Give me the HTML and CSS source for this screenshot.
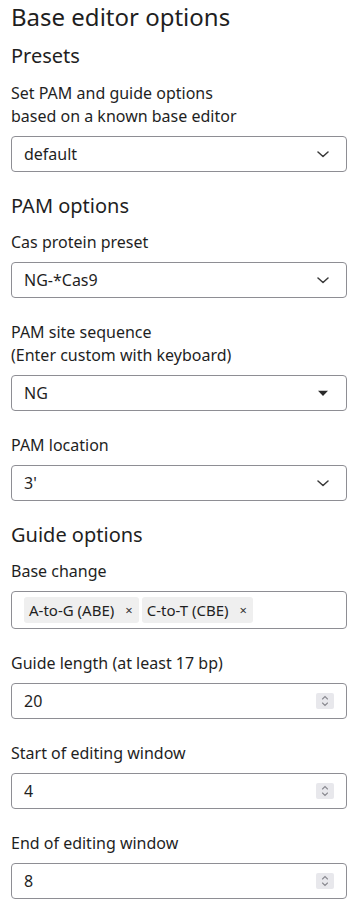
FILE: index.html
```html
<!DOCTYPE html>
<html>
<head>
<meta charset="utf-8">
<link rel="stylesheet" href="styles.css">
</head>
<body>
<div class="panel">
  <h1 class="title">Base editor options</h1>

  <h2 class="section section-first">Presets</h2>
  <div class="field">
    <div class="label">Set PAM and guide options<br>based on a known base editor</div>
    <div class="control select"><span class="value">default</span>
      <svg class="chev" width="12" height="7" viewBox="0 0 12 7"><path d="M1 1 L6 5.5 L11 1" fill="none" stroke="#3a3a3a" stroke-width="1.5" stroke-linecap="round" stroke-linejoin="round"/></svg>
    </div>
  </div>

  <h2 class="section">PAM options</h2>
  <div class="field">
    <div class="label">Cas protein preset</div>
    <div class="control select"><span class="value">NG-*Cas9</span>
      <svg class="chev" width="12" height="7" viewBox="0 0 12 7"><path d="M1 1 L6 5.5 L11 1" fill="none" stroke="#3a3a3a" stroke-width="1.5" stroke-linecap="round" stroke-linejoin="round"/></svg>
    </div>
  </div>
  <div class="field">
    <div class="label">PAM site sequence<br>(Enter custom with keyboard)</div>
    <div class="control select"><span class="value">NG</span>
      <svg class="chev" width="12" height="7" viewBox="0 0 12 7"><path d="M1 0.8 L11 0.8 L6 6 Z" fill="#2a2a2a"/></svg>
    </div>
  </div>
  <div class="field">
    <div class="label">PAM location</div>
    <div class="control select"><span class="value">3'</span>
      <svg class="chev" width="12" height="7" viewBox="0 0 12 7"><path d="M1 1 L6 5.5 L11 1" fill="none" stroke="#3a3a3a" stroke-width="1.5" stroke-linecap="round" stroke-linejoin="round"/></svg>
    </div>
  </div>

  <h2 class="section">Guide options</h2>
  <div class="field">
    <div class="label">Base change</div>
    <div class="control multi">
      <span class="chip">A-to-G (ABE)<span class="x">×</span></span>
      <span class="chip">C-to-T (CBE)<span class="x">×</span></span>
    </div>
  </div>
  <div class="field">
    <div class="label">Guide length (at least 17 bp)</div>
    <div class="control number"><span class="value">20</span>
      <span class="stepper"><svg width="18" height="16" viewBox="0 0 18 16"><path d="M6.5 6 L9 3.5 L11.5 6" fill="none" stroke="#8a8a90" stroke-width="1.1" stroke-linecap="round"/><path d="M6.5 10 L9 12.5 L11.5 10" fill="none" stroke="#8a8a90" stroke-width="1.1" stroke-linecap="round"/></svg></span>
    </div>
  </div>
  <div class="field">
    <div class="label">Start of editing window</div>
    <div class="control number"><span class="value">4</span>
      <span class="stepper"><svg width="18" height="16" viewBox="0 0 18 16"><path d="M6.5 6 L9 3.5 L11.5 6" fill="none" stroke="#8a8a90" stroke-width="1.1" stroke-linecap="round"/><path d="M6.5 10 L9 12.5 L11.5 10" fill="none" stroke="#8a8a90" stroke-width="1.1" stroke-linecap="round"/></svg></span>
    </div>
  </div>
  <div class="field">
    <div class="label">End of editing window</div>
    <div class="control number"><span class="value">8</span>
      <span class="stepper"><svg width="18" height="16" viewBox="0 0 18 16"><path d="M6.5 6 L9 3.5 L11.5 6" fill="none" stroke="#8a8a90" stroke-width="1.1" stroke-linecap="round"/><path d="M6.5 10 L9 12.5 L11.5 10" fill="none" stroke="#8a8a90" stroke-width="1.1" stroke-linecap="round"/></svg></span>
    </div>
  </div>
</div>
</body>
</html>
```

FILE: styles.css
```css
html, body {
  margin: 0;
  padding: 0;
  background: #ffffff;
}
body {
  font-family: "Noto Sans", "Open Sans", sans-serif;
  color: #1f1f1f;
}
.panel {
  padding: 1px 12px 0 11px;
}
.title {
  margin: 0;
  font-size: 24px;
  line-height: 31px;
  font-weight: 400;
}
.section {
  margin: 20px 0 11px;
  font-size: 20px;
  line-height: 28px;
  font-weight: 400;
}
.section-first {
  margin-top: 10px;
  margin-bottom: 12px;
}
.field + .field {
  margin-top: 23px;
}
.label {
  font-size: 16px;
  line-height: 23px;
  margin-bottom: 8px;
}
.control {
  box-sizing: border-box;
  height: 36px;
  border: 1px solid #8e8e94;
  border-radius: 4px;
  display: flex;
  align-items: center;
  padding: 0 17px 0 12px;
  font-size: 16px;
}
.value {
  flex: 1;
}
.chev {
  display: block;
}
.multi {
  height: 38px;
  gap: 3px;
}
.chip {
  display: inline-flex;
  align-items: center;
  height: 26px;
  background: #efefef;
  border-radius: 3px;
  padding: 0 6px 0 5px;
  font-size: 15px;
}
.chip .x {
  margin-left: 11px;
  font-size: 13px;
  color: #333;
}
.number {
  padding-right: 12px;
}
.stepper {
  display: block;
  width: 18px;
  height: 16px;
  background: #e8e8ec;
  border-radius: 2px;
}
.stepper svg {
  display: block;
}
```
